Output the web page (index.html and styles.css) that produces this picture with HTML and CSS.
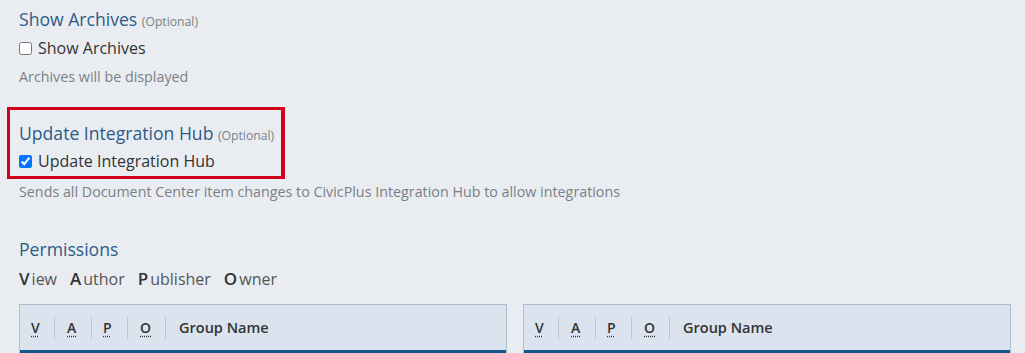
FILE: index.html
```html
<!DOCTYPE html>
<html>
<head>
<meta charset="utf-8">
<link rel="stylesheet" href="styles.css">
</head>
<body>
<div class="page">
  <div class="field">
    <div class="field-title">Show Archives <span class="optional">(Optional)</span></div>
    <label class="check-row"><input type="checkbox"> <span>Show Archives</span></label>
    <div class="help">Archives will be displayed</div>
  </div>

  <div class="highlight">
    <div class="field-title">Update Integration Hub <span class="optional">(Optional)</span></div>
    <label class="check-row"><input type="checkbox" checked> <span>Update Integration Hub</span></label>
  </div>
  <div class="help help-after">Sends all Document Center item changes to CivicPlus Integration Hub to allow integrations</div>

  <div class="perm-title">Permissions</div>
  <div class="legend">
    <span class="legend-item"><b>V</b>iew</span>
    <span class="legend-item"><b>A</b>uthor</span>
    <span class="legend-item"><b>P</b>ublisher</span>
    <span class="legend-item"><b>O</b>wner</span>
  </div>

  <div class="tables">
    <div class="perm-table">
      <div class="thead">
        <div class="th col-v"><abbr>V</abbr></div>
        <div class="th col-a"><abbr>A</abbr></div>
        <div class="th col-p"><abbr>P</abbr></div>
        <div class="th col-o"><abbr>O</abbr></div>
        <div class="th col-name">Group Name</div>
      </div>
    </div>
    <div class="perm-table">
      <div class="thead">
        <div class="th col-v"><abbr>V</abbr></div>
        <div class="th col-a"><abbr>A</abbr></div>
        <div class="th col-p"><abbr>P</abbr></div>
        <div class="th col-o"><abbr>O</abbr></div>
        <div class="th col-name">Group Name</div>
      </div>
    </div>
  </div>
</div>
</body>
</html>
```
FILE: styles.css
```css
html, body {
  margin: 0;
  padding: 0;
  background: #e9edf1;
  overflow: hidden;
}
body {
  font-family: "Open Sans", "Noto Sans", sans-serif;
  color: #333;
}
.page {
  padding: 7px 14px 0 19px;
}
.field-title {
  font-size: 17.6px;
  line-height: 24px;
  color: #2c5b89;
}
.optional {
  font-size: 12.2px;
  color: #7b7f85;
}
.check-row {
  display: flex;
  align-items: center;
  height: 20px;
  margin-top: 4px;
  font-size: 16px;
  color: #333;
}
.check-row input {
  margin: 0 6px 0 0;
  width: 13px;
  height: 13px;
}
.help {
  font-size: 14.3px;
  line-height: 20px;
  color: #7b7f85;
  margin-top: 9px;
}
.highlight {
  margin: 20px 0 0 -12px;
  width: 262px;
  border: 3px solid #d0021b;
  border-right-width: 4px;
  padding: 11px 0 5px 9px;
}
.highlight .check-row {
  margin-top: 3px;
}
.help-after {
  margin-top: 3px;
}
.perm-title {
  margin-top: 35px;
  font-size: 17.6px;
  line-height: 24px;
  color: #2c5b89;
}
.legend {
  display: flex;
  gap: 13px;
  margin-top: 7px;
  height: 20px;
  align-items: center;
  font-size: 16px;
  color: #555;
}
.legend b {
  font-weight: 600;
  color: #333;
  font-size: 17px;
  margin-right: 2px;
}
.tables {
  display: flex;
  gap: 16px;
  margin-top: 16px;
}
.perm-table {
  flex: 0 0 488px;
  box-sizing: border-box;
  border: 1px solid #aebccb;
  border-bottom: 0;
  background: #dae3ee;
}
.thead {
  display: flex;
  align-items: center;
  height: 45px;
  border-bottom: 3px solid #14558a;
}
.th {
  box-sizing: border-box;
  height: 22px;
  display: flex;
  align-items: center;
  font-size: 14px;
  font-weight: 600;
  color: #333;
  border-right: 1px solid #b9c4d1;
  padding-left: 11px;
}
.col-v { width: 35px; }
.col-a { width: 37px; padding-left: 12px; }
.col-p { width: 36px; padding-left: 11px; }
.col-o { width: 38px; padding-left: 12px; }
.col-name {
  border-right: 0;
  padding-left: 13px;
  font-size: 14.5px;
  font-weight: 600;
}
abbr {
  text-decoration: underline dotted;
  text-underline-offset: 3px;
}
```
